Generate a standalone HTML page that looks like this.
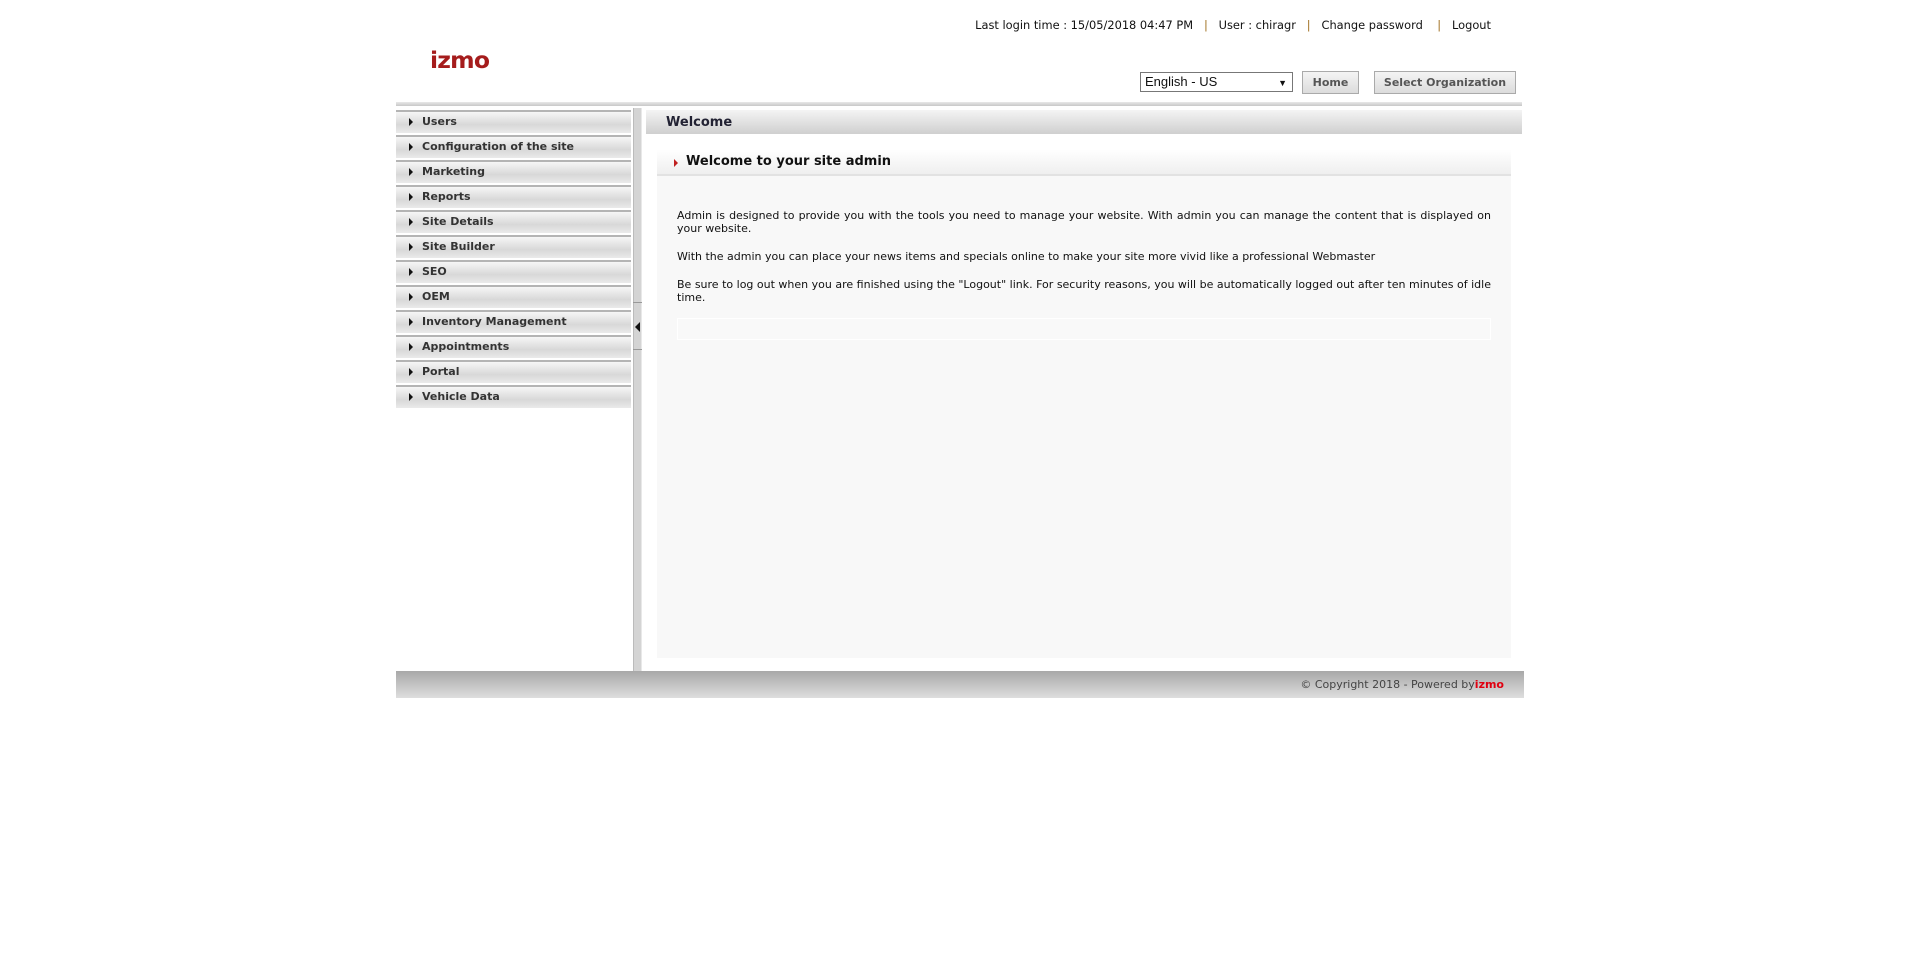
<!DOCTYPE html>
<html><head><meta charset="utf-8"><style>
*{margin:0;padding:0;box-sizing:border-box}
body{width:1920px;height:974px;background:#fff;font-family:"DejaVu Sans","Liberation Sans",sans-serif;font-size:11px;color:#111;position:relative;overflow:hidden}
.a{position:absolute}
.top{top:18px;right:429px;font-size:11.4px;white-space:pre;color:#111}
.top .s{color:#a07020}
.logo{left:430px;top:46px;font-family:"DejaVu Sans",sans-serif;font-weight:bold;font-size:23.5px;color:#a51c1c;letter-spacing:-0.8px}
.sel{left:1140px;top:72px;width:153px;height:20px;border:1px solid #777;background:#fff;font-family:"Liberation Sans",sans-serif;font-size:13px;padding:1px 4px;line-height:16px}
.sel:after{content:"▼";position:absolute;right:5px;top:2px;font-size:9px}
.btn{top:71px;height:23px;border:1px solid #aaa;background:linear-gradient(#f4f4f4,#dcdcdc);color:#555;font-weight:bold;font-size:11px;text-align:center;line-height:21px}
.line{left:396px;top:102px;width:1126px;height:4px;background:linear-gradient(#e8e8e8,#c8c8c8)}
.side{left:396px;top:110px;width:235px}
.it{height:25px;border-bottom:2px solid #fff;background:linear-gradient(#f6f6f6,#d8d8d8 60%,#eaeaea);border-top:2px solid #b4b4b4;font-weight:bold;color:#333;line-height:20px;padding-left:26px;position:relative}
.it:before{content:"";position:absolute;left:13px;top:6px;border-left:4px solid #111;border-top:4px solid transparent;border-bottom:4px solid transparent}
.spl{left:633px;top:108px;width:9px;height:563px;background:#d4d4d4;border-left:1px solid #bbb;border-right:1px solid #e8e8e8}
.arr{left:635px;top:322px;border-right:5px solid #111;border-top:5px solid transparent;border-bottom:5px solid transparent}
.wh{left:646px;top:110px;width:876px;height:24px;background:linear-gradient(#f4f4f4,#cfcfcf);font-weight:bold;font-size:13px;color:#223;padding-left:20px;line-height:26px}
.box{left:657px;top:150px;width:854px;height:508px;background:#f8f8f8}
.bh{left:657px;top:150px;width:854px;height:26px;background:linear-gradient(#fff,#efefef);border-bottom:2px solid #e2e2e2;font-weight:bold;font-size:13px;color:#111;padding-left:29px;line-height:23px}
.bh:before{content:"";position:absolute;left:17px;top:9px;border-left:4px solid #c02020;border-top:4px solid transparent;border-bottom:4px solid transparent}
.txt{left:677px;top:209px;width:814px;line-height:13px;text-align:justify;font-size:11px}
.txt p{margin-bottom:15px}
.eb{left:677px;top:318px;width:814px;height:22px;border:1px solid #fff;background:#f9f9f9}
.ft{left:396px;top:671px;width:1128px;height:27px;background:linear-gradient(#a8a8a8,#dedede);text-align:right;padding-right:20px;line-height:27px;color:#444;font-size:11px}
.ft b{color:#e00010}
</style></head><body>
<div class="a top">Last login time : 15/05/2018 04:47 PM   <span class="s">|</span>   User : chiragr   <span class="s">|</span>   Change password    <span class="s">|</span>   Logout</div>
<div class="a logo">izmo</div>
<div class="a sel">English - US</div>
<div class="a btn" style="left:1302px;width:57px">Home</div>
<div class="a btn" style="left:1374px;width:142px">Select Organization</div>
<div class="a line"></div>
<div class="a side">
<div class="it">Users</div><div class="it">Configuration of the site</div><div class="it">Marketing</div><div class="it">Reports</div><div class="it">Site Details</div><div class="it">Site Builder</div><div class="it">SEO</div><div class="it">OEM</div><div class="it">Inventory Management</div><div class="it">Appointments</div><div class="it">Portal</div><div class="it">Vehicle Data</div>
</div>
<div class="a spl"></div>
<div class="a" style="left:633px;top:302px;width:9px;height:48px;border-top:1px solid #999;border-bottom:1px solid #999"></div>
<div class="a arr"></div>
<div class="a wh">Welcome</div>
<div class="a box"></div>
<div class="a bh">Welcome to your site admin</div>
<div class="a txt">
<p>Admin is designed to provide you with the tools you need to manage your website. With admin you can manage the content that is displayed on your website.</p>
<p>With the admin you can place your news items and specials online to make your site more vivid like a professional Webmaster</p>
<p>Be sure to log out when you are finished using the "Logout" link. For security reasons, you will be automatically logged out after ten minutes of idle time.</p>
</div>
<div class="a eb"></div>
<div class="a ft">© Copyright 2018 - Powered by<b>izmo</b></div>
</body></html>
